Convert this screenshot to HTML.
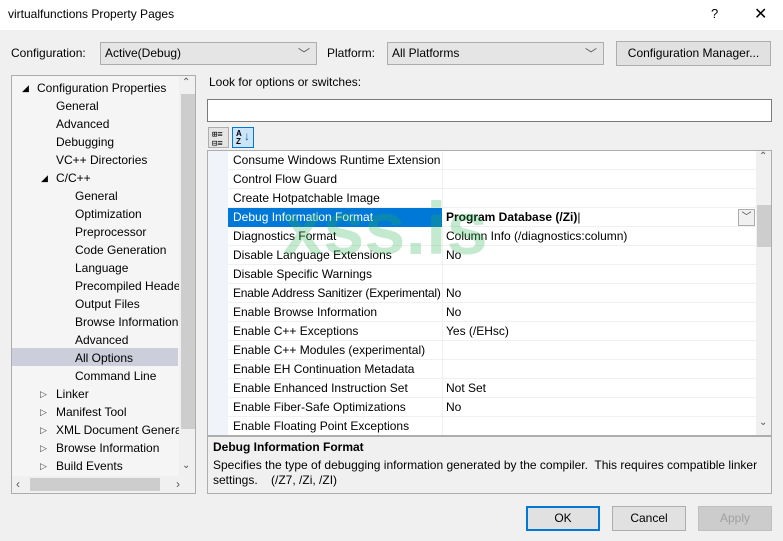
<!DOCTYPE html>
<html><head><meta charset="utf-8"><style>
*{margin:0;padding:0;box-sizing:border-box}
body{width:783px;height:541px;background:#f0f0f0;font-family:"Liberation Sans",sans-serif;font-size:12px;color:#000;position:relative;overflow:hidden}
.a{position:absolute;white-space:nowrap}
.t{line-height:18px;height:18px}
.row{position:absolute;left:0;width:529px;height:19px;border-bottom:1px solid #f0f0f0}
.row .n{position:absolute;left:5px;top:2px}
.row .v{position:absolute;left:218px;top:2px}
.row .sep{position:absolute;left:214px;top:0;width:1px;height:19px;background:#f0f0f0}
.btn{position:absolute;top:506px;width:74px;height:25px;border:1px solid #adadad;background:#e1e1e1;text-align:center;line-height:23px}
</style></head><body>
<div class="a" style="left:0;top:0;width:783px;height:30px;background:#fff"></div>
<div class="a" style="left:8px;top:7px">virtualfunctions Property Pages</div>
<div class="a" style="left:711px;top:6px;font-size:13px">?</div>
<div class="a" style="left:754px;top:4px;font-size:16px">✕</div>

<div class="a" style="left:11px;top:46px">Configuration:</div>
<div class="a" style="left:100px;top:42px;width:217px;height:23px;background:#e5e5e5;border:1px solid #adadad;padding:3px 0 0 4px">Active(Debug)<span style="position:absolute;right:6px;top:2px;color:#555">﹀</span></div>
<div class="a" style="left:327px;top:46px">Platform:</div>
<div class="a" style="left:387px;top:42px;width:217px;height:23px;background:#e5e5e5;border:1px solid #adadad;padding:3px 0 0 4px">All Platforms<span style="position:absolute;right:6px;top:2px;color:#555">﹀</span></div>
<div class="a" style="left:616px;top:41px;width:155px;height:25px;background:#e1e1e1;border:1px solid #adadad;text-align:center;line-height:23px">Configuration Manager...</div>

<!-- tree -->
<div class="a" style="left:11px;top:75px;width:185px;height:419px;border:1px solid #adadad;background:#f5f5f5;overflow:hidden">
 <div class="a" style="left:0;top:272px;width:166px;height:18px;background:#cccedb"></div>
 <div class="a t" style="left:10px;top:3px;font-size:9px">◢</div><div class="a t" style="left:25px;top:3px">Configuration Properties</div>
 <div class="a t" style="left:44px;top:21px">General</div>
 <div class="a t" style="left:44px;top:39px">Advanced</div>
 <div class="a t" style="left:44px;top:57px">Debugging</div>
 <div class="a t" style="left:44px;top:75px">VC++ Directories</div>
 <div class="a t" style="left:29px;top:93px;font-size:9px">◢</div><div class="a t" style="left:44px;top:93px">C/C++</div>
 <div class="a t" style="left:63px;top:111px">General</div>
 <div class="a t" style="left:63px;top:129px">Optimization</div>
 <div class="a t" style="left:63px;top:147px">Preprocessor</div>
 <div class="a t" style="left:63px;top:165px">Code Generation</div>
 <div class="a t" style="left:63px;top:183px">Language</div>
 <div class="a t" style="left:63px;top:201px">Precompiled Headers</div>
 <div class="a t" style="left:63px;top:219px">Output Files</div>
 <div class="a t" style="left:63px;top:237px">Browse Information</div>
 <div class="a t" style="left:63px;top:255px">Advanced</div>
 <div class="a t" style="left:63px;top:273px">All Options</div>
 <div class="a t" style="left:63px;top:291px">Command Line</div>
 <div class="a t" style="left:28px;top:309px;font-size:9px;color:#444">▷</div><div class="a t" style="left:44px;top:309px">Linker</div>
 <div class="a t" style="left:28px;top:327px;font-size:9px;color:#444">▷</div><div class="a t" style="left:44px;top:327px">Manifest Tool</div>
 <div class="a t" style="left:28px;top:345px;font-size:9px;color:#444">▷</div><div class="a t" style="left:44px;top:345px">XML Document Generator</div>
 <div class="a t" style="left:28px;top:363px;font-size:9px;color:#444">▷</div><div class="a t" style="left:44px;top:363px">Browse Information</div>
 <div class="a t" style="left:28px;top:381px;font-size:9px;color:#444">▷</div><div class="a t" style="left:44px;top:381px">Build Events</div>
 <div class="a" style="left:167px;top:0;width:17px;height:400px;background:#f0f0f0"></div>
 <div class="a" style="left:169px;top:18px;width:14px;height:335px;background:#cdcdcd"></div>
 <div class="a" style="left:170px;top:1px;font-size:10px;color:#555">⌃</div>
 <div class="a" style="left:170px;top:384px;font-size:10px;color:#555">⌄</div>
 <div class="a" style="left:0;top:400px;width:184px;height:17px;background:#f0f0f0"></div>
 <div class="a" style="left:18px;top:402px;width:130px;height:13px;background:#cdcdcd"></div>
 <div class="a" style="left:4px;top:401px;font-size:12px;color:#555">‹</div>
 <div class="a" style="left:164px;top:401px;font-size:12px;color:#555">›</div>
</div>

<div class="a" style="left:209px;top:75px">Look for options or switches:</div>
<div class="a" style="left:207px;top:99px;width:565px;height:23px;background:#fff;border:1px solid #7a7a7a"></div>
<div class="a" style="left:208px;top:127px;width:21px;height:21px;border:1px solid #adadad;background:#e5e5e5;font-size:9px;line-height:9px;padding:3px 0 0 3px;font-family:'Liberation Mono',monospace">⊞≡<br>⊟≡</div>
<div class="a" style="left:232px;top:127px;width:22px;height:21px;border:1px solid #0078d7;background:#cce4f7;font-size:8px;line-height:8px;font-weight:bold;padding:2px 0 0 3px">A<br>Z<span style="position:absolute;left:11px;top:4px;color:#0060c0;font-size:12px">↓</span></div>

<!-- grid -->
<div class="a" style="left:207px;top:150px;width:565px;height:286px;border:1px solid #adadad;background:#fff;overflow:hidden">
 <div class="a" style="left:0;top:0;width:20px;height:286px;background:#f0f3f9"></div>
 <div class="a" style="left:20px;top:0;width:528px;height:286px">
  <div class="row" style="top:0"><span class="n">Consume Windows Runtime Extension</span><div class="sep"></div></div>
  <div class="row" style="top:19px"><span class="n">Control Flow Guard</span><div class="sep"></div></div>
  <div class="row" style="top:38px"><span class="n">Create Hotpatchable Image</span><div class="sep"></div></div>
  <div class="row" style="top:57px"><div class="a" style="left:0;top:0;width:214px;height:19px;background:#0078d7"></div><span class="n" style="color:#fff">Debug Information Format</span><span class="v" style="font-weight:bold">Program Database (/Zi)<span style="font-weight:normal">|</span></span><div class="a" style="left:510px;top:1px;width:17px;height:17px;border:1px solid #adadad;background:#f0f0f0;font-size:10px;text-align:center;line-height:15px;color:#444">﹀</div></div>
  <div class="row" style="top:76px"><span class="n">Diagnostics Format</span><div class="sep"></div><span class="v">Column Info (/diagnostics:column)</span></div>
  <div class="row" style="top:95px"><span class="n">Disable Language Extensions</span><div class="sep"></div><span class="v">No</span></div>
  <div class="row" style="top:114px"><span class="n">Disable Specific Warnings</span><div class="sep"></div></div>
  <div class="row" style="top:133px"><span class="n" style="letter-spacing:-0.2px">Enable Address Sanitizer (Experimental)</span><div class="sep"></div><span class="v">No</span></div>
  <div class="row" style="top:152px"><span class="n">Enable Browse Information</span><div class="sep"></div><span class="v">No</span></div>
  <div class="row" style="top:171px"><span class="n">Enable C++ Exceptions</span><div class="sep"></div><span class="v">Yes (/EHsc)</span></div>
  <div class="row" style="top:190px"><span class="n">Enable C++ Modules (experimental)</span><div class="sep"></div></div>
  <div class="row" style="top:209px"><span class="n">Enable EH Continuation Metadata</span><div class="sep"></div></div>
  <div class="row" style="top:228px"><span class="n">Enable Enhanced Instruction Set</span><div class="sep"></div><span class="v">Not Set</span></div>
  <div class="row" style="top:247px"><span class="n">Enable Fiber-Safe Optimizations</span><div class="sep"></div><span class="v">No</span></div>
  <div class="row" style="top:266px"><span class="n">Enable Floating Point Exceptions</span><div class="sep"></div></div>
 </div>
 <div class="a" style="left:548px;top:0;width:16px;height:284px;background:#f0f0f0"></div>
 <div class="a" style="left:549px;top:54px;width:14px;height:42px;background:#cdcdcd"></div>
 <div class="a" style="left:551px;top:0;font-size:10px;color:#555">⌃</div>
 <div class="a" style="left:551px;top:266px;font-size:10px;color:#555">⌄</div>
</div>
<div class="a" style="left:282px;top:186px;font-size:74px;font-weight:bold;color:rgba(40,180,80,0.28)">xss.is</div>

<div class="a" style="left:207px;top:436px;width:565px;height:58px;border:1px solid #adadad;background:#f0f0f0"></div>
<div class="a" style="left:213px;top:440px;font-weight:bold">Debug Information Format</div>
<div class="a" style="left:213px;top:458px">Specifies the type of debugging information generated by the compiler.&nbsp; This requires compatible linker</div>
<div class="a" style="left:213px;top:473px">settings.&nbsp;&nbsp;&nbsp; (/Z7, /Zi, /ZI)</div>

<div class="btn" style="left:526px;border:2px solid #0078d7;line-height:21px">OK</div>
<div class="btn" style="left:612px">Cancel</div>
<div class="btn" style="left:698px;color:#a0a0a0;border-color:#bfbfbf;background:#cccccc">Apply</div>
</body></html>
